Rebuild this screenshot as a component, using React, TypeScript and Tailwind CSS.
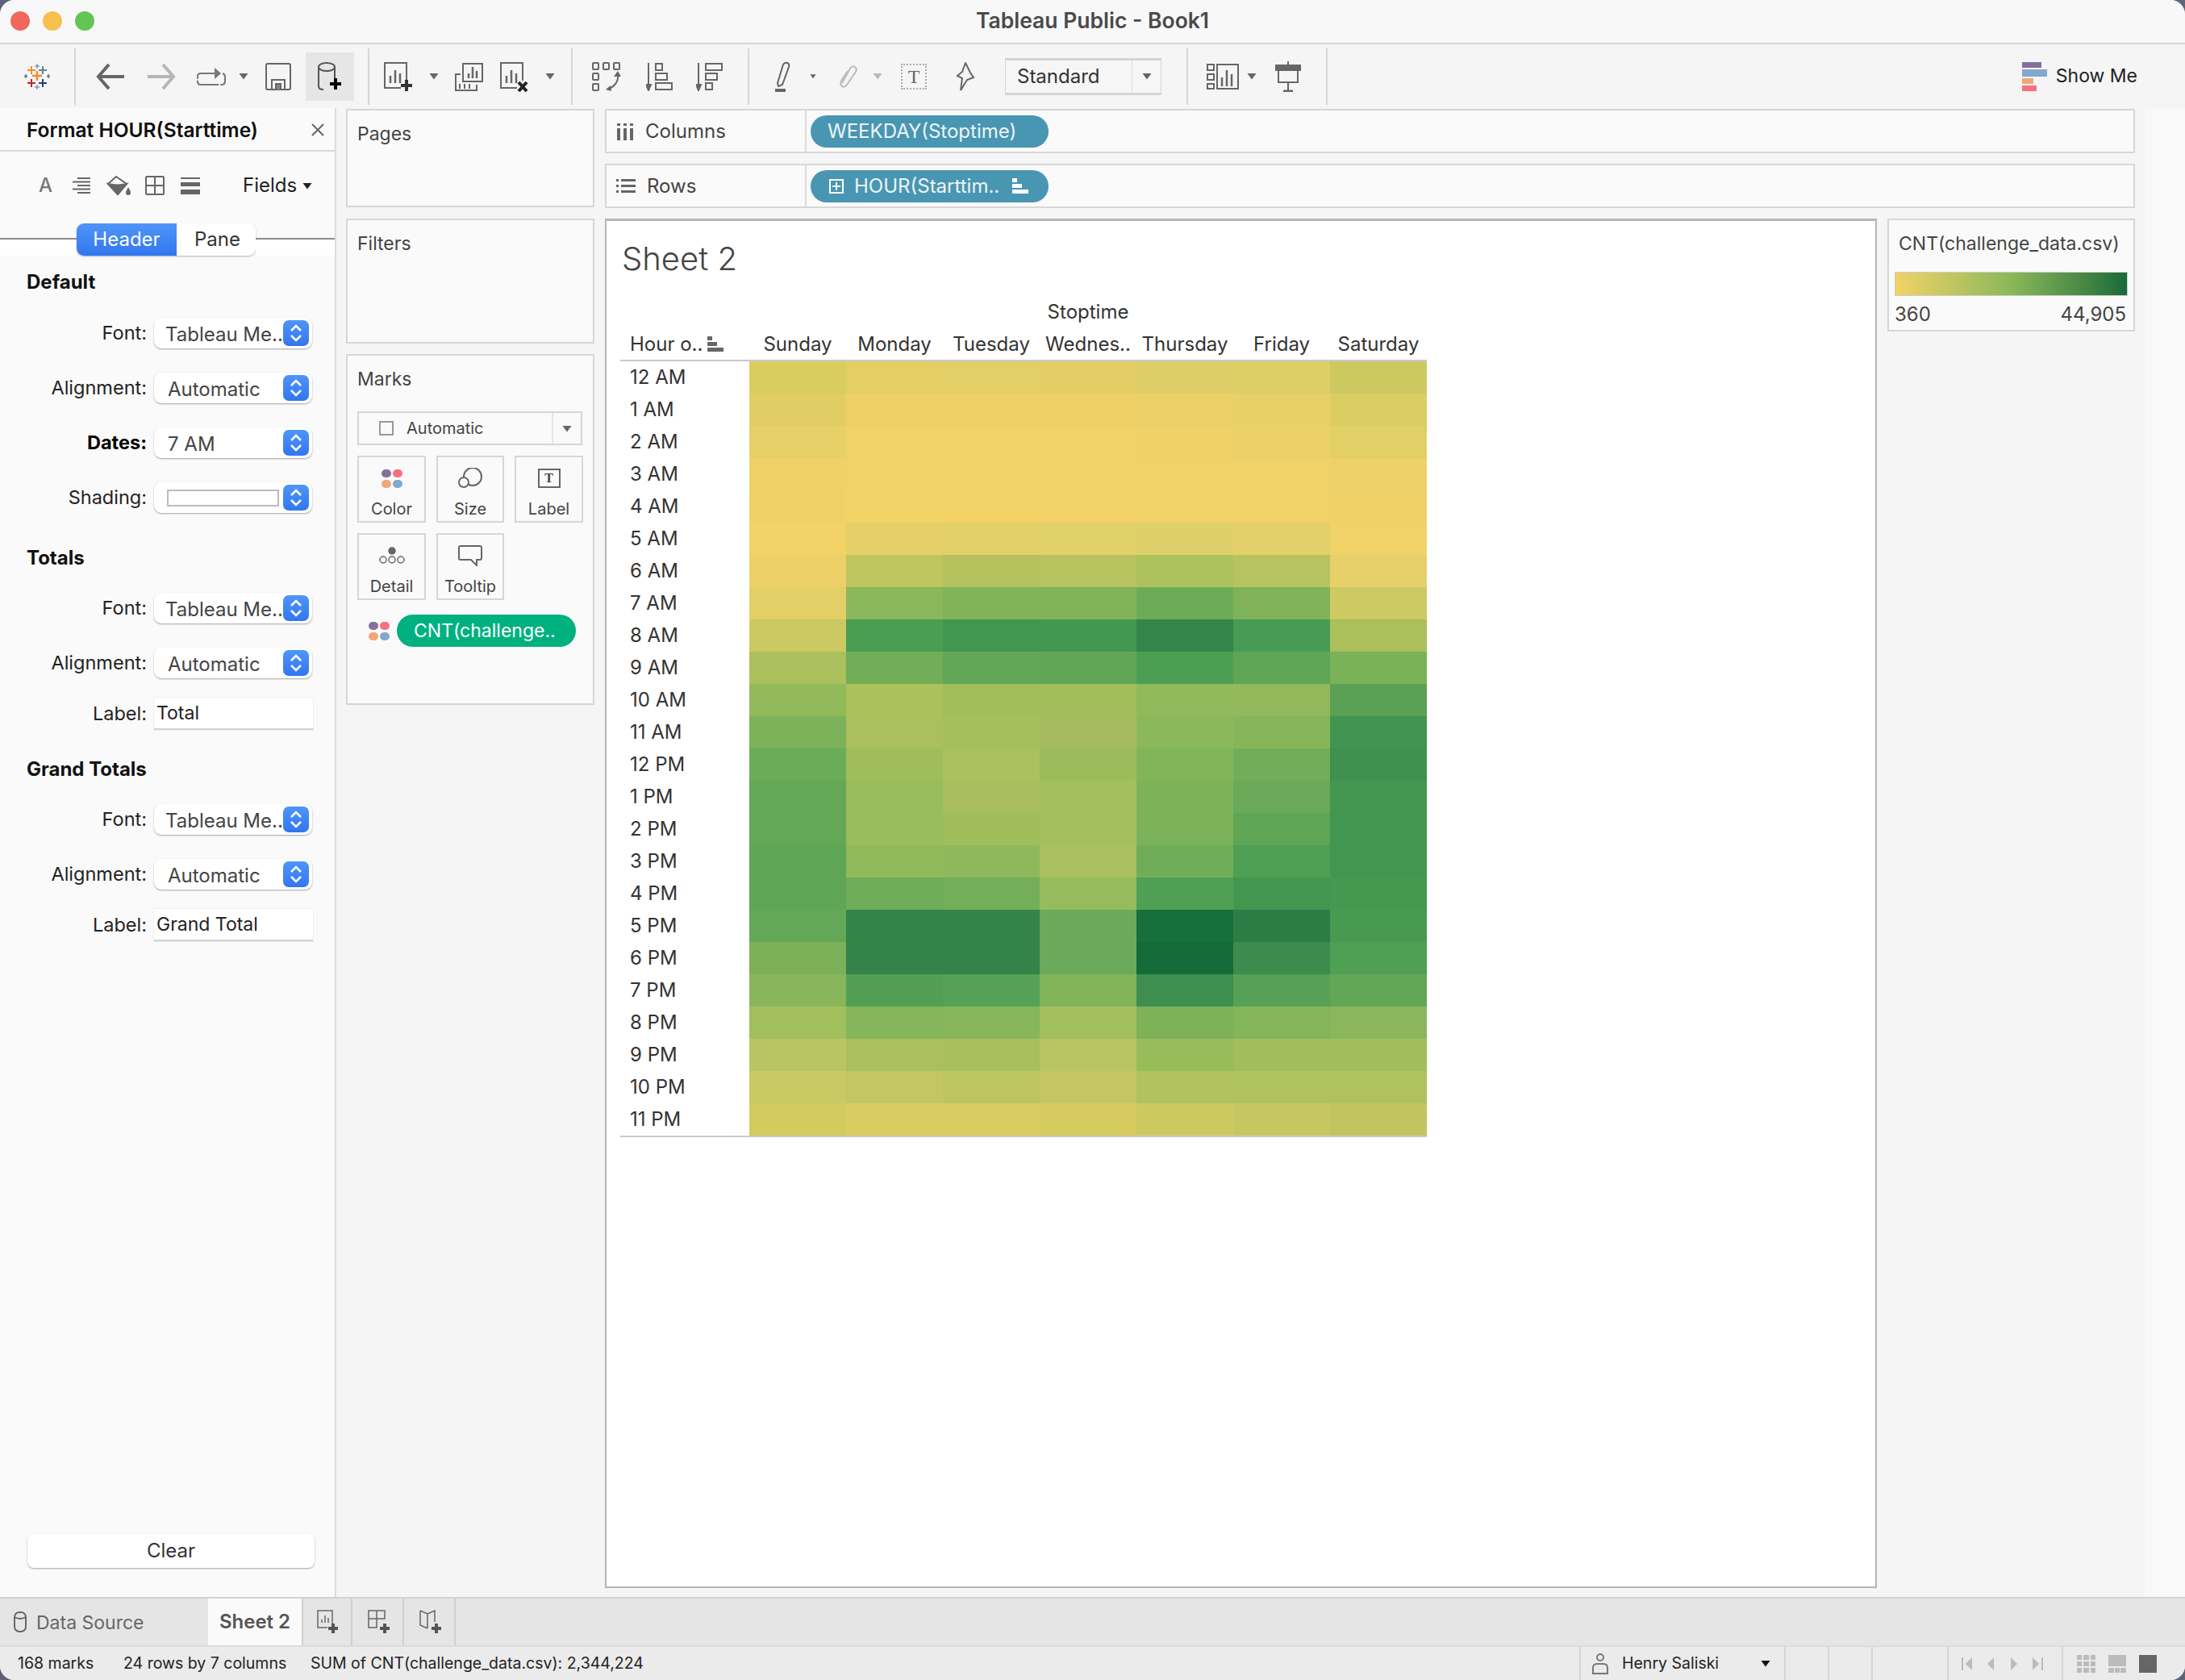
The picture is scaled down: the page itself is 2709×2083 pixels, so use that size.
import React from 'react';

const font = "font-['Inter',sans-serif]";

const heat = [
  ['#d9cd60', '#e3cf64', '#e2cf65', '#e2ce65', '#dfce67', '#dfcd66', '#ccc961'],
  ['#e0ce64', '#eed066', '#eed066', '#eed066', '#ecd067', '#e8d067', '#dccd63'],
  ['#e6d067', '#f1d267', '#f1d267', '#f1d267', '#efd168', '#ecd168', '#e2cf66'],
  ['#efd168', '#f2d267', '#f2d267', '#f2d267', '#f1d267', '#f0d268', '#eed168'],
  ['#f0d168', '#f3d267', '#f3d267', '#f2d267', '#f1d267', '#f1d267', '#efd168'],
  ['#f3d367', '#e5d068', '#e3cf68', '#e1cf68', '#dfcf6a', '#e3cf69', '#f1d268'],
  ['#eed068', '#bfc55f', '#b5c25e', '#b7c35f', '#adc15c', '#b7c361', '#e7d069'],
  ['#e2cf65', '#8ab759', '#81b459', '#81b459', '#6cac58', '#80b359', '#cdc963'],
  ['#ccc962', '#4b9d54', '#429750', '#439851', '#348549', '#489b54', '#abbf5b'],
  ['#abc05c', '#72ad57', '#62a757', '#61a656', '#4c9e53', '#5fa556', '#7ab258'],
  ['#92b95a', '#aac15c', '#a2be5b', '#a2be5b', '#8fb95b', '#92b95b', '#5aa155'],
  ['#7cb259', '#a9c05c', '#a5bf5c', '#a4bc5e', '#8ab85b', '#87b65a', '#419550'],
  ['#6bac58', '#9fbd5b', '#abc05e', '#9cbc5c', '#82b55a', '#72ad59', '#3e914e'],
  ['#64a857', '#99bc5c', '#a9bf5f', '#a4c05e', '#7cb35a', '#69a958', '#439650'],
  ['#64a857', '#99bc5c', '#a0bd5c', '#a4c05e', '#7cb35a', '#5fa556', '#439650'],
  ['#5ea555', '#90b95c', '#8fb85c', '#abc060', '#70ad58', '#4e9e53', '#439650'],
  ['#5ea555', '#70ad59', '#74ae59', '#96bb5c', '#4fa054', '#43954f', '#459850'],
  ['#64a857', '#348349', '#348349', '#6aaa5a', '#176f3c', '#2d7c46', '#489a53'],
  ['#7cb159', '#348349', '#348349', '#6aaa5a', '#156b38', '#3d8c4e', '#4f9f54'],
  ['#89b65b', '#529f54', '#55a156', '#82b45a', '#3e8e4f', '#56a155', '#62a656'],
  ['#a2bf5d', '#85b55a', '#87b65b', '#a3c05f', '#7eb259', '#85b55b', '#8bb65b'],
  ['#b9c562', '#abc05d', '#a8bf5d', '#b9c463', '#99bc5b', '#a2be5c', '#a2be5c'],
  ['#c9c963', '#c3c763', '#bdc561', '#c5c663', '#b1c25e', '#b0c25e', '#b0c25e'],
  ['#d4cb5f', '#d9cd62', '#d8cc60', '#d6cb5f', '#cdc961', '#c6c761', '#c2c55f'],
];

const hours = ['12 AM', '1 AM', '2 AM', '3 AM', '4 AM', '5 AM', '6 AM', '7 AM', '8 AM', '9 AM', '10 AM', '11 AM', '12 PM', '1 PM', '2 PM', '3 PM', '4 PM', '5 PM', '6 PM', '7 PM', '8 PM', '9 PM', '10 PM', '11 PM'];
const days = ['Sunday', 'Monday', 'Tuesday', 'Wednes..', 'Thursday', 'Friday', 'Saturday'];

const Sep = () => <div className="w-[2px] h-[70px] bg-[#d6d6d6] shrink-0" />;

const Caret = ({ className = '', color = '#666' }: { className?: string; color?: string }) => (
  <svg width="12" height="9" viewBox="0 0 12 9" className={className}>
    <path d="M0.5 1h11L6 8.5z" fill={color} />
  </svg>
);

// toolbar slot, centres its icon
const Slot = ({ className, children }: { className: string; children: React.ReactNode }) => (
  <div className={`flex items-center justify-center shrink-0 ${className}`}>{children}</div>
);

const TableauLogo = () => (
  <svg width="32" height="32" viewBox="0 0 32 32" fill="none" strokeWidth="2">
    <path d="M16 9v12M10 15h12" stroke="#f28e2b" strokeWidth="2.4" />
    <path d="M9 3v10M4 8h10" stroke="#f28e2b" />
    <path d="M23 3v10M18 8h10" stroke="#59879b" />
    <path d="M9 19v10M4 24h10" stroke="#c72035" />
    <path d="M23 19v10M18 24h10" stroke="#1f447a" />
    <path d="M16 0v6M13 3h6M16 26v6M13 29h6" stroke="#7b9bb5" strokeWidth="1.5" />
    <path d="M2 13v5M0 15.500h4M30 13v5M28 15.500h4" stroke="#5b6f91" strokeWidth="1.5" />
  </svg>
);

const Plus = ({ x, y, s = 12, color = '#333' }: { x: number; y: number; s?: number; color?: string }) => (
  <path d={`M${x} ${y - s / 2}v${s}M${x - s / 2} ${y}h${s}`} stroke={color} strokeWidth="4" fill="none" />
);

const BarSheet = ({ plus = false, cross = false }: { plus?: boolean; cross?: boolean }) => (
  <svg width="38" height="38" viewBox="0 0 38 38" fill="none" stroke="#666" strokeWidth="2">
    <path d="M29 24V2H2v31h20" />
    <path d="M9 27v-9M15 27V11M21 27v-12" strokeWidth="2.5" />
    {plus && <Plus x={29} y={30} s={14} />}
    {cross && <path d="M24 26l10 11M34 26l-10 11" stroke="#222" strokeWidth="4" />}
  </svg>
);

const Toolbar = () => (
  <div className="h-[79px] flex items-center bg-[#f5f5f5] shrink-0">
    <Slot className="w-[92px]"><TableauLogo /></Slot>
    <Sep />
    <Slot className="w-[86px]">
      <svg width="36" height="32" viewBox="0 0 36 32" fill="none" stroke="#666" strokeWidth="4"><path d="M35 16H3M16 1L3 16l13 15" /></svg>
    </Slot>
    <Slot className="w-[40px]">
      <svg width="36" height="32" viewBox="0 0 36 32" fill="none" stroke="#b5b5b5" strokeWidth="4"><path d="M1 16h32M20 1l13 15-13 15" /></svg>
    </Slot>
    <Slot className="w-[52px] ml-[16px]">
      <svg width="36" height="24" viewBox="0 0 36 24" fill="none" stroke="#777" strokeWidth="2"><path d="M26 8H5Q1 8 1 12v6q0 4 4 4h26q4 0 4-4v-6q0-3-3-4" strokeDasharray="30 2" /><path d="M22 1l8 7-8 7" fill="#777" stroke="none" /></svg>
    </Slot>
    <Slot className="w-[28px]"><Caret /></Slot>
    <Slot className="w-[58px]">
      <svg width="32" height="34" viewBox="0 0 32 34" fill="none" stroke="#666" strokeWidth="2"><rect x="1" y="1" width="30" height="32" rx="2" /><path d="M8 33V21h16v12" /><path d="M13 33v-7h6v7" fill="#888" /></svg>
    </Slot>
    <Slot className="w-[60px] h-[60px] ml-[5px] bg-[#e6e6e6]">
      <svg width="32" height="36" viewBox="0 0 32 36" fill="none" stroke="#555" strokeWidth="2"><ellipse cx="12" cy="6" rx="10" ry="5" /><path d="M2 6v24q0 4 6 4M22 6v20" /><Plus x={23} y={27} s={14} color="#000" /></svg>
    </Slot>
    <div className="w-[17px]" />
    <Sep />
    <Slot className="w-[72px]"><BarSheet plus /></Slot>
    <Slot className="w-[16px]"><Caret /></Slot>
    <Slot className="w-[70px]">
      <svg width="36" height="36" viewBox="0 0 36 36" fill="none" stroke="#666" strokeWidth="2"><path d="M11 2h24v22H11z" /><path d="M18 20v-6M23 20V6M28 20v-9" strokeWidth="2.5" /><path d="M8 15H2v20h26v-7" /><path d="M7 27v6M13 27v6M19 27v6" /></svg>
    </Slot>
    <Slot className="w-[44px]"><BarSheet cross /></Slot>
    <Slot className="w-[44px]"><Caret /></Slot>
    <div className="w-[4px]" />
    <Sep />
    <Slot className="w-[84px]">
      <svg width="36" height="36" viewBox="0 0 36 36" fill="none" stroke="#666" strokeWidth="2"><rect x="1" y="1" width="7" height="8" rx="1" /><rect x="14" y="1" width="7" height="8" rx="1" /><rect x="27" y="1" width="7" height="8" rx="1" /><rect x="1" y="14" width="7" height="8" rx="1" /><rect x="1" y="27" width="7" height="8" rx="1" /><path d="M32 14q2 14-13 20" /><path d="M27 18l5-7 4 7zM23 29l-6 5 7 2z" fill="#666" stroke="none" /></svg>
    </Slot>
    <Slot className="w-[48px]">
      <svg width="34" height="36" viewBox="0 0 34 36" fill="none" stroke="#666" strokeWidth="2"><path d="M3 1v30" /><path d="M0 28l3 7 3-7z" fill="#666" /><rect x="12" y="2" width="8" height="8" /><rect x="12" y="14" width="14" height="8" /><rect x="12" y="26" width="20" height="8" /></svg>
    </Slot>
    <Slot className="w-[76px]">
      <svg width="34" height="36" viewBox="0 0 34 36" fill="none" stroke="#666" strokeWidth="2"><path d="M3 1v30" /><path d="M0 28l3 7 3-7z" fill="#666" /><rect x="12" y="2" width="20" height="8" /><rect x="12" y="14" width="14" height="8" /><rect x="12" y="26" width="8" height="8" /></svg>
    </Slot>
    <div className="w-[9px]" />
    <Sep />
    <Slot className="w-[64px] ml-[11px]">
      <svg width="24" height="38" viewBox="0 0 24 38" fill="none" stroke="#666" strokeWidth="2"><path d="M4 27L11 4q2-3 5-2t2 5L10 29l-5 2z" /><path d="M1 36h13" strokeWidth="4" /></svg>
    </Slot>
    <Slot className="w-[8px]"><Caret /></Slot>
    <Slot className="w-[60px] ml-[8px]">
      <svg width="26" height="32" viewBox="0 0 26 32" fill="none" stroke="#bbb" strokeWidth="2"><path d="M7 24L17 6q3-4 6-2t1 6L13 26q-3 4-6 2t-1-7L14 9" /></svg>
    </Slot>
    <Slot className="w-[16px]"><Caret color="#bbb" /></Slot>
    <Slot className="w-[74px]">
      <div className="w-[32px] h-[32px] border-2 border-dotted border-[#aaa] flex items-center justify-center text-[24px] leading-none text-[#666] font-['Liberation_Serif',serif]">T</div>
    </Slot>
    <Slot className="w-[54px]">
      <svg width="24" height="36" viewBox="0 0 24 36" fill="none" stroke="#666" strokeWidth="2"><path d="M12 1l6 12 4 6-8 3-8 13 2-15-6-3 6-5z" /></svg>
    </Slot>
    <div className="w-[194px] h-[46px] ml-[22px] shrink-0 flex border border-[#d4d4d4] border-y-[3px] bg-[#f6f6f6] text-[24px] text-[#333] items-center">
      <div className="flex-1 pl-[14px]">Standard</div>
      <div className="w-[36px] h-full border-l border-[#ddd] flex items-center justify-center"><Caret /></div>
    </div>
    <div className="w-[31px]" />
    <Sep />
    <Slot className="w-[52px] ml-[17px]">
      <svg width="40" height="32" viewBox="0 0 40 32" fill="none" stroke="#666" strokeWidth="2"><rect x="1" y="1" width="8" height="7" /><rect x="1" y="13" width="8" height="7" /><rect x="1" y="25" width="8" height="6" /><rect x="13" y="1" width="26" height="30" /><path d="M19 28V17M25 28V8M31 28V13" strokeWidth="2.5" /></svg>
    </Slot>
    <Slot className="w-[20px]"><Caret /></Slot>
    <Slot className="w-[70px]">
      <svg width="32" height="38" viewBox="0 0 32 38" fill="none" stroke="#666" strokeWidth="2"><path d="M16 0v5M4 6h24v20H4zM16 26v10" /><path d="M1 5h30v6H1z" fill="#666" /><path d="M10 37h12" strokeWidth="3" /></svg>
    </Slot>
    <div className="w-[12px]" />
    <Sep />
    <div className="ml-auto mr-[59px] flex items-center gap-[11px]">
      <div className="flex flex-col gap-[2px] w-[31px]">
        <div className="w-[24px] h-[7px] bg-[#86709a]" />
        <div className="w-[31px] h-[9px] bg-[#82a8cf]" />
        <div className="w-[14px] h-[7px] bg-[#f0a877]" />
        <div className="w-[18px] h-[7px] bg-[#f7707e]" />
      </div>
      <span className="text-[23px] text-[#222]">Show Me</span>
    </div>
  </div>
);

const Stepper = () => (
  <div className="w-[32px] h-[32px] rounded-[7px] bg-gradient-to-b from-[#4f95f8] to-[#3276ef] flex items-center justify-center shrink-0">
    <svg width="18" height="26" viewBox="0 0 18 26" fill="none" stroke="#fff" strokeWidth="2.500"><path d="M3 10l6-6 6 6M3 16l6 6 6-6" /></svg>
  </div>
);

const Field = ({ label, bold, children }: { label: string; bold?: boolean; children: React.ReactNode }) => (
  <div className="flex items-center">
    <div className={`w-[182px] text-right text-[23.500px] text-[#222] ${bold ? 'font-bold text-black' : ''}`}>{label}</div>
    <div className="ml-[9px]">{children}</div>
  </div>
);

const Select = ({ value, swatch, pad = 'pl-[17px]' }: { value?: string; swatch?: boolean; pad?: string }) => (
  <div className={`w-[196px] h-[38px] rounded-[9px] bg-white shadow-[0_1px_2px_rgba(0,0,0,0.35)] flex items-center justify-between pr-[4px] ${swatch ? 'pl-[16px]' : pad}`}>
    {swatch ? <div className="w-[139px] h-[21px] border-2 border-[#bcbcbc] bg-white" /> : <span className="pt-[3px] text-[24px] text-[#444] whitespace-nowrap overflow-hidden">{value}</span>}
    <Stepper />
  </div>
);

const TextField = ({ value }: { value: string }) => (
  <div className="w-[197px] h-[40px] bg-white border-b-2 border-[#d2d2d2] shadow-[0_0_0_1px_#eeeeee] flex items-center pl-[3px] text-[23px] text-[#222]">{value}</div>
);

const Heading = ({ className, children }: { className: string; children: React.ReactNode }) => (
  <div className={`h-[30px] leading-[30px] ml-[33px] text-[24px] font-bold text-[#111] ${className}`}>{children}</div>
);

const FormatPanel = () => (
  <div className="w-[417px] shrink-0 bg-[#fafafa] border-r-2 border-[#dcdcdc] flex flex-col">
    <div className="h-[54px] border-b-2 border-[#d8d8d8] flex items-center justify-between pl-[33px] pr-[13px] pt-[2px] shrink-0">
      <span className="text-[24.500px] font-semibold text-[#111] whitespace-nowrap">Format HOUR(Starttime)</span>
      <svg width="16" height="16" viewBox="0 0 16 16" stroke="#666" strokeWidth="2"><path d="M1 1l14 14M15 1L1 15" /></svg>
    </div>
    <div className="h-[84px] flex items-center shrink-0 relative">
      <span className="ml-[48px] w-[16px] text-[24px] text-[#777] font-medium leading-none">A</span>
      <svg className="ml-[26px]" width="22" height="20" viewBox="0 0 22 20" stroke="#666" strokeWidth="2"><path d="M6 1h16M0 5.500h22M6 10h16M0 14.500h22M6 19h16" /></svg>
      <svg className="ml-[20px]" width="30" height="26" viewBox="0 0 30 26" fill="none" stroke="#666" strokeWidth="2"><path d="M2 11l10-9 13 9-11 13z" /><path d="M2 11q12 3 23 0L14 24z" fill="#666" /><path d="M27 15q3 5 3 7a2.500 2.500 0 0 1-6 0q0-2 3-7z" fill="#666" stroke="none" /></svg>
      <svg className="ml-[18px]" width="24" height="24" viewBox="0 0 24 24" fill="none" stroke="#666" strokeWidth="2"><rect x="1" y="1" width="22" height="22" rx="1" /><path d="M12 1v22M1 12h22" /></svg>
      <div className="ml-[20px] w-[24px] flex flex-col gap-[4px]"><div className="h-[2px] bg-[#666]" /><div className="h-[5px] bg-[#666]" /><div className="h-[6px] bg-[#666]" /></div>
      <span className="ml-[53px] text-[24px] text-[#222]">Fields</span>
      <Caret className="ml-[7px]" color="#222" />
    </div>
    <div className="mt-[5px] flex h-[40px] shrink-0">
      <div className="w-[95px] flex flex-col"><div className="h-[20px] border-b-2 border-[#8c8c8c]" /><div className="flex-1 bg-white" /></div>
      <div className="flex w-[222px] rounded-[9px] overflow-hidden shadow-[0_1px_2px_rgba(0,0,0,0.3)] text-[24px]">
        <div className="w-[124px] bg-gradient-to-b from-[#4f95f8] to-[#3276ef] text-white flex items-center justify-center">Header</div>
        <div className="flex-1 bg-white text-[#333] flex items-center justify-center pl-[3px]">Pane</div>
      </div>
      <div className="flex-1 flex flex-col"><div className="h-[20px] border-b-2 border-[#8c8c8c]" /><div className="flex-1 bg-white" /></div>
    </div>

    <Heading className="mt-[18px]">Default</Heading>
    <div className="mt-[29px] flex flex-col gap-[30px]">
      <Field label="Font:"><Select value="Tableau Me.." pad="pl-[14px]" /></Field>
      <Field label="Alignment:"><Select value="Automatic" /></Field>
      <Field label="Dates:" bold><Select value="7 AM" /></Field>
      <Field label="Shading:"><Select swatch /></Field>
    </div>

    <Heading className="mt-[41px]">Totals</Heading>
    <div className="mt-[28px] flex flex-col gap-[30px]">
      <Field label="Font:"><Select value="Tableau Me.." pad="pl-[14px]" /></Field>
      <Field label="Alignment:"><Select value="Automatic" /></Field>
    </div>
    <div className="mt-[24px]"><Field label="Label:"><TextField value="Total" /></Field></div>

    <Heading className="mt-[34px]">Grand Totals</Heading>
    <div className="mt-[28px] flex flex-col gap-[30px]">
      <Field label="Font:"><Select value="Tableau Me.." pad="pl-[14px]" /></Field>
      <Field label="Alignment:"><Select value="Automatic" /></Field>
    </div>
    <div className="mt-[24px]"><Field label="Label:"><TextField value="Grand Total" /></Field></div>

    <div className="mt-auto mb-[36px] ml-[34px] w-[356px] h-[42px] rounded-[8px] bg-white shadow-[0_1px_2px_rgba(0,0,0,0.35)] flex items-center justify-center text-[24px] text-[#333]">Clear</div>
  </div>
);

const Dots = () => (
  <div className="grid grid-cols-2 gap-x-[2px] gap-y-[3px] w-[26px]">
    <div className="w-[12px] h-[10px] rounded-full bg-[#86709a]" />
    <div className="w-[12px] h-[10px] rounded-full bg-[#f7707e]" />
    <div className="w-[12px] h-[10px] rounded-full bg-[#f0a877]" />
    <div className="w-[12px] h-[10px] rounded-full bg-[#82a8cf]" />
  </div>
);

const MarkCard = ({ label, width, children }: { label: string; width: string; children: React.ReactNode }) => (
  <div className={`${width} h-[83px] border-2 border-[#d6d6d6] flex flex-col items-center pt-[10px] shrink-0`}>
    <div className="h-[32px] flex items-center justify-center">{children}</div>
    <div className="mt-[10px] text-[20px] leading-[24px] text-[#444]">{label}</div>
  </div>
);

const SidePanel = ({ title, className, children }: { title: string; className: string; children?: React.ReactNode }) => (
  <div className={`border-2 border-[#d6d6d6] bg-[#fafafa] shrink-0 ${className}`}>
    <div className="ml-[12px] text-[23px] leading-[30px] text-[#444] mt-[14px]">{title}</div>
    {children}
  </div>
);

const MiddleColumn = () => (
  <div className="w-[308px] ml-[12px] mt-[1px] shrink-0 flex flex-col">
    <SidePanel title="Pages" className="h-[122px]" />
    <SidePanel title="Filters" className="h-[155px] mt-[14px]" />
    <SidePanel title="Marks" className="h-[435px] mt-[13px]">
      <div className="ml-[12px] mt-[25px] w-[279px] h-[42px] border-2 border-[#d6d6d6] flex items-center">
        <div className="flex-1 flex items-center pl-[25px] gap-[16px]">
          <div className="w-[18px] h-[18px] border-2 border-[#999]" />
          <span className="text-[20px] text-[#444]">Automatic</span>
        </div>
        <div className="w-[36px] h-full border-l-2 border-[#e4e4e4] flex items-center justify-center"><Caret /></div>
      </div>
      <div className="ml-[12px] mt-[13px] flex gap-[13px]">
        <MarkCard label="Color" width="w-[85px]"><Dots /></MarkCard>
        <MarkCard label="Size" width="w-[84px]">
          <svg width="30" height="26" viewBox="0 0 30 26" fill="none" stroke="#666" strokeWidth="2"><circle cx="18" cy="11" r="11" /><circle cx="7" cy="18" r="6" fill="#fafafa" /></svg>
        </MarkCard>
        <MarkCard label="Label" width="w-[85px]">
          <div className="w-[28px] h-[24px] border-2 border-[#666] flex items-center justify-center text-[16px] leading-none text-[#444] font-['Liberation_Serif',serif] font-bold">T</div>
        </MarkCard>
      </div>
      <div className="ml-[12px] mt-[13px] flex gap-[13px]">
        <MarkCard label="Detail" width="w-[85px]">
          <svg width="32" height="22" viewBox="0 0 32 22" fill="none" stroke="#666" strokeWidth="1.5"><circle cx="16" cy="5" r="4" fill="#666" /><circle cx="5" cy="16" r="4" /><circle cx="16" cy="16" r="4" /><circle cx="27" cy="16" r="4" /></svg>
        </MarkCard>
        <MarkCard label="Tooltip" width="w-[84px]">
          <svg width="30" height="26" viewBox="0 0 30 26" fill="none" stroke="#666" strokeWidth="2"><path d="M3 1h24q2 0 2 2v13q0 2-2 2h-4v7l-7-7H3q-2 0-2-2V3q0-2 2-2z" /></svg>
        </MarkCard>
      </div>
      <div className="mt-[18px] ml-[26px] flex items-center gap-[9px]">
        <Dots />
        <div className="w-[222px] h-[40px] rounded-full bg-[#00b180] flex items-center pl-[21px] text-[23px] text-white whitespace-nowrap">CNT(challenge..</div>
      </div>
    </SidePanel>
  </div>
);

const Shelf = ({ icon, label, className, children }: { icon: React.ReactNode; label: string; className: string; children: React.ReactNode }) => (
  <div className={`h-[55px] border-y-2 border-[#d6d6d6] border-r-2 border-l-2 bg-[#fafafa] flex items-center shrink-0 ${className}`}>
    <div className="w-[248px] h-full border-r-2 border-[#dcdcdc] flex items-center pl-[12px] gap-[14px]">
      {icon}
      <span className="text-[24px] text-[#444]">{label}</span>
    </div>
    <div className="ml-[5px] w-[295px] h-[40px] rounded-full bg-[#4996b2] flex items-center text-[24px] text-white/90 whitespace-nowrap">{children}</div>
  </div>
);

const Heatmap = () => (
  <div className="ml-[17px] w-[1000px]">
    <div className="pl-[160px] text-center text-[24px] leading-[22px] text-[#333] mt-[30px]">Stoptime</div>
    <div className="flex h-[38px] mt-[10px] items-center">
      <div className="w-[160px] pl-[12px] flex items-center gap-[6px] text-[24px] text-[#333]">
        <span>Hour o..</span>
        <svg width="20" height="20" viewBox="0 0 20 20" fill="#666"><rect x="0" y="0" width="6" height="5" /><rect x="0" y="7" width="12" height="5" /><rect x="0" y="14" width="20" height="5" /></svg>
      </div>
      {days.map((d) => (
        <div key={d} className="w-[120px] text-center text-[24px] text-[#333] whitespace-nowrap">{d}</div>
      ))}
    </div>
    <div className="border-y-2 border-[#c9c9cd]">
      {hours.map((h, i) => (
        <div key={h} className="flex h-[40px]">
          <div className="w-[160px] pl-[12px] flex items-center text-[24px] text-[#333] bg-white">{h}</div>
          {heat[i].map((c, j) => (
            <div key={j} className="w-[120px]" style={{ backgroundColor: c }} />
          ))}
        </div>
      ))}
    </div>
  </div>
);

const RightColumn = () => (
  <div className="w-[1897px] ml-[13px] mt-[1px] shrink-0 flex flex-col">
    <Shelf
      className=""
      label="Columns"
      icon={<svg width="22" height="22" viewBox="0 0 22 22" fill="#666"><rect x="1" y="1" width="4" height="3" /><rect x="1" y="7" width="4" height="15" /><rect x="9" y="1" width="4" height="3" /><rect x="9" y="7" width="4" height="15" /><rect x="17" y="1" width="4" height="3" /><rect x="17" y="7" width="4" height="15" /></svg>}
    >
      <span className="ml-[21px]">WEEKDAY(Stoptime)</span>
    </Shelf>
    <Shelf
      className="mt-[13px]"
      label="Rows"
      icon={<svg width="24" height="20" viewBox="0 0 24 20" fill="#666"><rect x="0" y="1" width="3" height="3" /><rect x="6" y="1" width="18" height="3" /><rect x="0" y="8" width="3" height="3" /><rect x="6" y="8" width="18" height="3" /><rect x="0" y="15" width="3" height="3" /><rect x="6" y="15" width="18" height="3" /></svg>}
    >
      <svg className="ml-[23px]" width="18" height="18" viewBox="0 0 18 18" fill="none" stroke="#fff" strokeWidth="2"><rect x="1" y="1" width="16" height="16" /><path d="M9 4v10M4 9h10" /></svg>
      <span className="ml-[13px]">HOUR(Starttim..</span>
      <svg className="ml-[16px]" width="20" height="20" viewBox="0 0 20 20" fill="#fff"><rect x="0" y="0" width="6" height="5" /><rect x="0" y="7" width="12" height="5" /><rect x="0" y="14" width="20" height="5" /></svg>
    </Shelf>
    <div className="flex mt-[13px] flex-1 min-h-0">
      <div className="w-[1577px] h-[1698px] border-2 border-[#b5b5b5] border-t-[3px] bg-white shrink-0">
        <div className="ml-[19px] mt-[22px] text-[40px] leading-[50px] font-light text-[#444]">Sheet 2</div>
        <Heatmap />
      </div>
      <div className="ml-[13px] w-[307px] h-[140px] border-2 border-[#d6d6d6] bg-[#fafafa] shrink-0 px-[7px]">
        <div className="text-[23px] leading-[30px] text-[#444] mt-[14px] ml-[5px] whitespace-nowrap">CNT(challenge_data.csv)</div>
        <div className="h-[30px] mt-[20px] bg-gradient-to-r from-[#f2d267] via-[#8ab85a] to-[#146b38] border border-[#ccc]" />
        <div className="mt-[8px] flex justify-between text-[24px] leading-[30px] text-[#444] pr-[2px]">
          <span>360</span>
          <span>44,905</span>
        </div>
      </div>
    </div>
  </div>
);

const TabIcon = ({ children, width }: { children: React.ReactNode; width: string }) => (
  <div className={`${width} h-full border-r-2 border-[#d0d0d0] flex items-center justify-center pl-[5px]`}>{children}</div>
);

const TabBar = () => (
  <div className="h-[60px] bg-[#e5e5e5] border-t-2 border-[#d2d2d2] flex shrink-0">
    <div className="w-[258px] flex items-center pl-[17px] gap-[12px] text-[23px] text-[#666]">
      <svg width="16" height="26" viewBox="0 0 16 26" fill="none" stroke="#666" strokeWidth="2"><rect x="1" y="1" width="14" height="24" rx="6" /><path d="M1 7q7 4 14 0" /></svg>
      <span className="pt-[2px]">Data Source</span>
    </div>
    <div className="w-[116px] bg-[#fafafa] flex items-center justify-center text-[24px] font-semibold text-[#555]">Sheet 2</div>
    <TabIcon width="w-[63px] border-l-2">
      <svg width="30" height="30" viewBox="0 0 30 30" fill="none" stroke="#666" strokeWidth="1.5"><path d="M19 18V1H1v21h12" /><path d="M6 16v-4M10 16V7M14 16v-6" /><Plus x={20} y={23} s={12} color="#555" /></svg>
    </TabIcon>
    <TabIcon width="w-[64px]">
      <svg width="30" height="30" viewBox="0 0 30 30" fill="none" stroke="#666" strokeWidth="1.5"><path d="M1 1h20v10H11v11H1zM11 1v21M1 11h10" /><Plus x={21} y={23} s={12} color="#555" /></svg>
    </TabIcon>
    <TabIcon width="w-[64px]">
      <svg width="30" height="30" viewBox="0 0 30 30" fill="none" stroke="#666" strokeWidth="1.5"><path d="M1 1l9 4 9-4v14M1 1v18l9 4M10 5v18" /><Plus x={21} y={23} s={12} color="#555" /></svg>
    </TabIcon>
  </div>
);

const StatusCell = ({ className, children }: { className: string; children?: React.ReactNode }) => (
  <div className={`h-full border-l-2 border-[#d6d6d6] flex items-center shrink-0 ${className}`}>{children}</div>
);

const StatusBar = () => (
  <div className="h-[43px] bg-[#ebebeb] border-t-2 border-[#dcdcdc] flex items-center text-[19.500px] text-[#222] shrink-0">
    <span className="ml-[22px] w-[131px]">168 marks</span>
    <span className="w-[232px]">24 rows by 7 columns</span>
    <span>SUM of CNT(challenge_data.csv): 2,344,224</span>
    <div className="ml-auto flex h-full">
      <StatusCell className="w-[254px] pl-[13px]">
        <svg width="22" height="26" viewBox="0 0 22 26" fill="none" stroke="#777" strokeWidth="2"><circle cx="11" cy="5" r="4" /><path d="M2 25v-7q0-5 5-5h8q5 0 5 5v7z" /></svg>
        <span className="ml-[16px] w-[172px]">Henry Saliski</span>
        <Caret color="#111" />
      </StatusCell>
      <StatusCell className="w-[54px]" />
      <StatusCell className="w-[54px]" />
      <StatusCell className="w-[94px]" />
      <StatusCell className="w-[142px] pl-[16px] gap-[17px]">
        <svg width="14" height="16" viewBox="0 0 14 16" fill="#bbb"><rect x="0" y="0" width="2" height="16" /><path d="M13 0v16L5 8z" /></svg>
        <svg width="11" height="16" viewBox="0 0 11 16" fill="#bbb"><path d="M9 0v16L1 8z" /></svg>
        <svg width="11" height="16" viewBox="0 0 11 16" fill="#bbb"><path d="M2 0v16l8-8z" /></svg>
        <svg width="14" height="16" viewBox="0 0 14 16" fill="#bbb"><rect x="12" y="0" width="2" height="16" /><path d="M1 0v16l8-8z" /></svg>
      </StatusCell>
      <StatusCell className="w-[153px] pl-[17px] gap-[16px]">
        <div className="grid grid-cols-3 gap-[2px] w-[23px]">
          {Array.from({ length: 9 }).map((_, i) => <div key={i} className="h-[6px] bg-[#bbb]" />)}
        </div>
        <div className="w-[22px]">
          <div className="h-[14px] bg-[#bbb]" />
          <div className="mt-[2px] grid grid-cols-3 gap-[1px]">
            {[0, 1, 2].map((i) => <div key={i} className="h-[6px] bg-[#bbb]" />)}
          </div>
        </div>
        <div className="w-[22px] h-[22px] bg-[#666]" />
      </StatusCell>
    </div>
  </div>
);

export default function App() {
  return (
    <div className={`w-[2709px] h-[2083px] bg-[#5f6278] overflow-hidden ${font}`}>
      <div className="w-full h-full rounded-[18px] overflow-hidden flex flex-col bg-[#f5f5f5]">
        <div className="h-[55px] shrink-0 bg-[#f8f8f8] border-b-2 border-[#d4d4d4] relative flex items-center justify-center">
          <div className="absolute left-[13px] top-[14px] flex gap-[16px]">
            <div className="w-[24px] h-[24px] rounded-full bg-[#f1675c]" />
            <div className="w-[24px] h-[24px] rounded-full bg-[#f6c04e]" />
            <div className="w-[24px] h-[24px] rounded-full bg-[#62c554]" />
          </div>
          <span className="pb-[2px] text-[26.500px] font-semibold text-[#4a4a4a]">Tableau Public - Book1</span>
        </div>
        <Toolbar />
        <div className="flex flex-1 min-h-0">
          <FormatPanel />
          <MiddleColumn />
          <RightColumn />
          <div className="flex-1 ml-[12px] bg-[#f9f9f9]" />
        </div>
        <TabBar />
        <StatusBar />
      </div>
    </div>
  );
}
